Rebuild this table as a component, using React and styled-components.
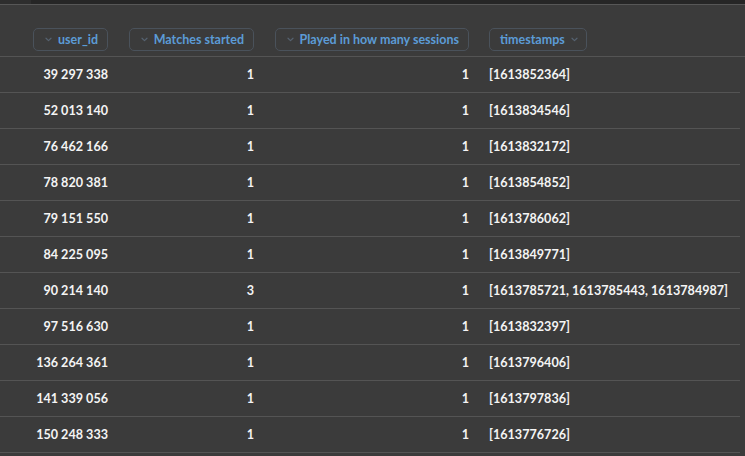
import React from "react";
import styled, { createGlobalStyle } from "styled-components";

const Global = createGlobalStyle`
  html, body { margin: 0; padding: 0; background: #3b3b3b; }
  body { font-family: Lato, "Open Sans", sans-serif; overflow: hidden; }
`;

const Page = styled.div`
  width: 745px;
  height: 456px;
  background: #3b3b3b;
  display: flex;
  flex-direction: column;
  overflow: hidden;
`;

const TopBand = styled.div`
  height: 4px;
  display: flex;
  border-bottom: 1px solid #575757;
`;

const BandPart = styled.div`
  width: ${(p) => (p.$w ? `${p.$w}px` : "auto")};
  flex: ${(p) => (p.$w ? "none" : "1")};
  background: ${(p) => p.$bg};
`;

const Row = styled.div`
  display: grid;
  grid-template-columns: 108px 146px 215px 1fr;
  height: ${(p) => p.$h}px;
  align-items: ${(p) => (p.$header ? "end" : "center")};
  padding-bottom: ${(p) => (p.$header ? 5 : 0)}px;
  border-bottom: 1px solid #545454;
  box-sizing: border-box;
  margin-right: ${(p) => (p.$header ? 0 : 5)}px;
`;

const HeadCell = styled.div`
  display: flex;
  justify-content: ${(p) => (p.$left ? "flex-start" : "flex-end")};
  padding-left: ${(p) => (p.$left ? 20 : 0)}px;
`;

const Pill = styled.div`
  display: flex;
  align-items: center;
  gap: 6px;
  height: 23px;
  box-sizing: border-box;
  padding: 0 ${(p) => (p.$iconRight ? 8 : 9)}px 0 ${(p) => (p.$iconRight ? 10 : 11)}px;
  border: 1px solid #4a525b;
  border-radius: 5px;
  color: #5c9bd6;
  font-size: 12.5px;
  font-weight: 700;
  white-space: nowrap;
`;

const Cell = styled.div`
  color: #f4f4f4;
  font-size: 12.6px;
  font-weight: 700;
  white-space: nowrap;
  text-align: ${(p) => (p.$left ? "left" : "right")};
  padding-left: ${(p) => (p.$left ? 20 : 0)}px;
`;

const Chevron = () => (
  <svg width="7" height="5" viewBox="0 0 7 5" fill="none">
    <path d="M1 1.2 L3.5 3.6 L6 1.2" stroke="#566270" strokeWidth="1.2" strokeLinecap="round" strokeLinejoin="round" />
  </svg>
);

const rows = [
  ["39 297 338", 1, 1, "[1613852364]"],
  ["52 013 140", 1, 1, "[1613834546]"],
  ["76 462 166", 1, 1, "[1613832172]"],
  ["78 820 381", 1, 1, "[1613854852]"],
  ["79 151 550", 1, 1, "[1613786062]"],
  ["84 225 095", 1, 1, "[1613849771]"],
  ["90 214 140", 3, 1, "[1613785721, 1613785443, 1613784987]"],
  ["97 516 630", 1, 1, "[1613832397]"],
  ["136 264 361", 1, 1, "[1613796406]"],
  ["141 339 056", 1, 1, "[1613797836]"],
  ["150 248 333", 1, 1, "[1613776726]"],
];

export default function App() {
  return (
    <Page>
      <Global />
      <TopBand>
        <BandPart $w={31} $bg="#2e2e2e" />
        <BandPart $bg="#262626" />
      </TopBand>
      <Row $h={52} $header>
        <HeadCell>
          <Pill><Chevron />user_id</Pill>
        </HeadCell>
        <HeadCell>
          <Pill><Chevron />Matches started</Pill>
        </HeadCell>
        <HeadCell>
          <Pill><Chevron />Played in how many sessions</Pill>
        </HeadCell>
        <HeadCell $left>
          <Pill $iconRight>timestamps<Chevron /></Pill>
        </HeadCell>
      </Row>
      {rows.map((r, i) => (
        <Row key={i} $h={36}>
          <Cell>{r[0]}</Cell>
          <Cell>{r[1]}</Cell>
          <Cell>{r[2]}</Cell>
          <Cell $left>{r[3]}</Cell>
        </Row>
      ))}
    </Page>
  );
}
